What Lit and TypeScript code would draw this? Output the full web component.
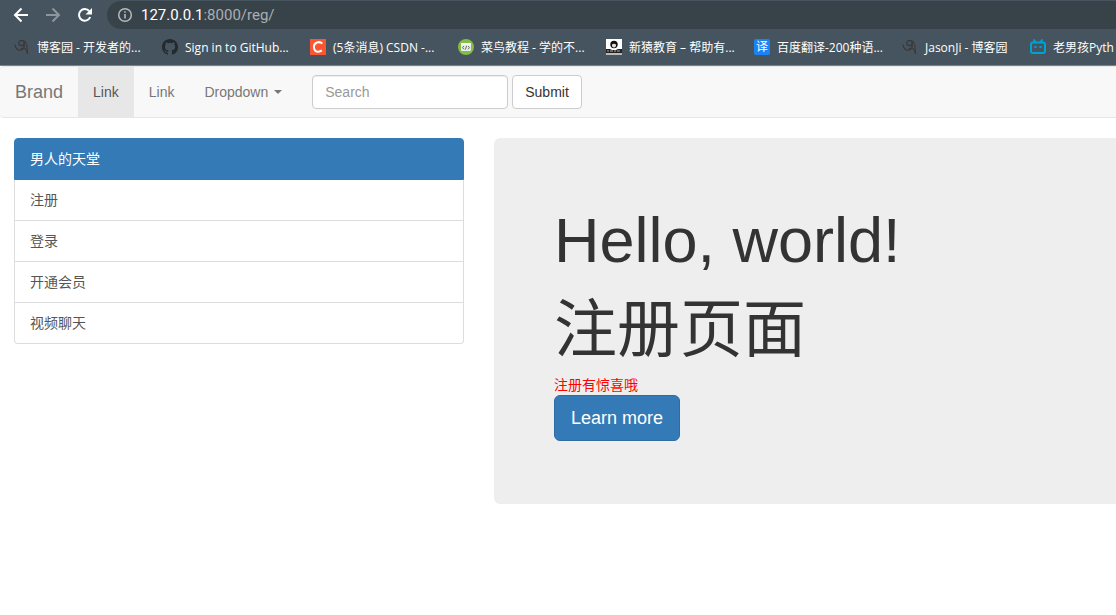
import { LitElement, html, css, svg } from "lit";
import { customElement, property } from "lit/decorators.js";
import { classMap } from "lit/directives/class-map.js";

const cnblogs = svg`<svg viewBox="0 0 16 16" width="16" height="16" aria-hidden="true">
  <g fill="none" stroke="#3b3737" stroke-width="1.2" stroke-linecap="round">
    <circle cx="7.500" cy="4" r="2.700"/>
    <path d="M10.200 4C10.800 7.500 9.500 10.800 6.500 11.200C3.500 11.300 1.500 8.500 .8 5.800M6.500 11C9 7.800 12.300 8.500 13.300 14.500"/>
    <path d="M11 2C12.800 5 13.400 9 13.400 14" stroke-width="1"/>
  </g></svg>`;

const github = svg`<svg viewBox="0 0 16 16" width="16" height="16" aria-hidden="true">
  <path fill="#24292e" d="M8 0C3.580 0 0 3.580 0 8c0 3.540 2.290 6.530 5.470 7.590.4.070.55-.17.55-.38 0-.19-.01-.82-.01-1.490-2.010.37-2.530-.49-2.690-.94-.09-.23-.48-.94-.82-1.130-.28-.15-.68-.52-.01-.53.63-.01 1.080.58 1.230.82.72 1.210 1.870.87 2.330.66.07-.52.28-.87.51-1.070-1.780-.2-3.640-.89-3.640-3.950 0-.87.31-1.590.82-2.150-.08-.2-.36-1.020.08-2.120 0 0 .67-.21 2.200.82a7.600 7.600 0 0 1 4 0c1.530-1.040 2.200-.82 2.200-.82.44 1.100.16 1.920.08 2.120.51.56.82 1.270.82 2.150 0 3.070-1.870 3.750-3.650 3.950.29.25.54.73.54 1.480 0 1.070-.01 1.930-.01 2.200 0 .21.15.46.55.38A8 8 0 0 0 16 8c0-4.420-3.580-8-8-8z"/></svg>`;

const csdn = svg`<svg viewBox="0 0 16 16" width="16" height="16" aria-hidden="true">
  <rect width="16" height="16" fill="#fc5531"/>
  <path d="M12.200 4.700C11 3.200 9 2.800 7 3.500C4.600 4.400 3.700 7 4 9.200C4.400 12 6.500 13 8.500 12.700C9.800 12.600 10.800 12.200 11.800 11.400" fill="none" stroke="#fff" stroke-width="2"/></svg>`;

const runoob = svg`<svg viewBox="0 0 16 16" width="16" height="16" aria-hidden="true">
  <circle cx="8" cy="8" r="8" fill="#83bd45"/>
  <rect x="3" y="4" width="10" height="8" rx="1" fill="#e9ede9"/>
  <path d="M3 4.800h10" stroke="#fff" stroke-width="1.600"/>
  <path d="M6 7L4.500 8.700L6 10.300M10 7l1.500 1.700L10 10.300M8.600 6.800l-1.200 3.700" fill="none" stroke="#5f6b61" stroke-width="1"/></svg>`;

const monkey = svg`<svg viewBox="0 0 16 16" width="16" height="16" aria-hidden="true">
  <rect width="16" height="16" fill="#fff"/>
  <circle cx="8" cy="5.500" r="3.700" fill="#111"/>
  <path d="M6 5.500q2-1.500 4 0q.3 3-2 3t-2-3z" fill="#ddd"/>
  <path d="M0 10h4l2 1h4l2-1h4v4H0z" fill="#222"/>
  <path d="M1 12h2m1 0h3m1 0h2m1 0h3" stroke="#aaa" stroke-width="1"/>
  <path d="M0 14h16v2H0z" fill="#bbb"/></svg>`;

const bilibili = svg`<svg viewBox="0 0 16 16" width="16" height="16" aria-hidden="true">
  <rect x="1" y="3.500" width="14" height="10.500" rx="2" fill="none" stroke="#00a1d6" stroke-width="2"/>
  <path d="M3.500 .5l2 2.500M12.500 .5l-2 2.500M5.500 7v2M10.500 7v2" fill="none" stroke="#00a1d6" stroke-width="2"/></svg>`;

const translate = html`<span class="translate">译</span>`;

const bookmarks = [
  { icon: cnblogs, label: "博客园 - 开发者的..." },
  { icon: github, label: "Sign in to GitHub..." },
  { icon: csdn, label: "(5条消息) CSDN -..." },
  { icon: runoob, label: "菜鸟教程 - 学的不..." },
  { icon: monkey, label: "新猿教育 – 帮助有..." },
  { icon: translate, label: "百度翻译-200种语..." },
  { icon: cnblogs, label: "JasonJi - 博客园", short: true },
  { icon: bilibili, label: "老男孩Pyth", short: true },
];

@customElement("browser-bar")
class BrowserBar extends LitElement {
  static styles = css`
    :host {
      display: block;
      background: #45545e;
      border-bottom: 1px solid #7c8289;
      color: #fff;
      font-family: "Open Sans", "Noto Sans CJK SC", sans-serif;
    }
    .toolbar { display: flex; align-items: center; padding-top: 1px; }
    .tools { display: flex; gap: 16px; padding: 0 14px 0 13px; }
    .tool { display: flex; padding: 0; border: 0; background: none; color: #fff; }
    .tool:disabled { color: #8d969c; }
    .address {
      flex: 1;
      display: flex;
      align-items: center;
      gap: 8px;
      height: 28px;
      padding-left: 10px;
      border-radius: 14px 0 0 14px;
      background: #384249;
      font-family: Roboto, sans-serif;
      font-size: 15px;
      line-height: 28px;
      color: #a9afb3;
    }
    .host { color: #fff; }
    .bookmarks { display: flex; gap: 16px; height: 36px; padding-left: 14px; overflow: hidden; }
    .bookmark {
      flex: none;
      display: flex;
      align-items: center;
      gap: 7px;
      color: #fff;
      font-size: 12px;
      line-height: 20px;
      text-decoration: none;
      white-space: nowrap;
    }
    .label { width: 109px; padding-top: 1px; }
    .short { width: auto; min-width: 89px; }
    .bookmark:last-child .label { min-width: 0; }
    .translate {
      width: 16px;
      height: 16px;
      border-radius: 2px;
      background: #1a84f5;
      font-size: 12px;
      line-height: 16px;
      text-align: center;
    }
  `;

  render() {
    return html`
      <div class="toolbar">
        <div class="tools">
          <button class="tool" aria-label="Back">
            <svg width="16" height="16" viewBox="0 0 16 16" fill="none" stroke="currentColor" stroke-width="2"><path d="M15 8H2.500M8.500 1.500L2 8l6.500 6.500"/></svg>
          </button>
          <button class="tool" aria-label="Forward" disabled>
            <svg width="16" height="16" viewBox="0 0 16 16" fill="none" stroke="currentColor" stroke-width="2"><path d="M1 8h12.500M7.500 1.500L14 8l-6.500 6.500"/></svg>
          </button>
          <button class="tool" aria-label="Reload">
            <svg width="16" height="16" viewBox="0 0 16 16"><path d="M13.200 10A5.800 5.800 0 1 1 12.300 4.200" fill="none" stroke="currentColor" stroke-width="2"/><path d="M15 1v6.500H8.500z" fill="currentColor"/></svg>
          </button>
        </div>
        <div class="address">
          <svg width="16" height="16" viewBox="0 0 16 16" fill="none" stroke="#b4babe" aria-hidden="true"><circle cx="8" cy="8" r="6.300" stroke-width="1.500"/><path d="M8 7v4.500M8 4.200v1.600" stroke-width="1.600"/></svg>
          <span><span class="host">127.0.0.1</span>:8000/reg/</span>
        </div>
      </div>
      <nav class="bookmarks" aria-label="Bookmarks">
        ${bookmarks.map((b) => html`<a class="bookmark" href="#">${b.icon}<span class=${classMap({ label: true, short: !!b.short })}>${b.label}</span></a>`)}
      </nav>
    `;
  }
}

@customElement("nav-bar")
class NavBar extends LitElement {
  static styles = css`
    :host { display: block; }
    .bar {
      display: flex;
      align-items: center;
      min-height: 50px;
      border: solid #e7e7e7;
      border-width: 1px 0;
      border-radius: 4px 0 0 4px;
      background: #f8f8f8;
    }
    .brand, .link { padding: 15px; line-height: 20px; color: #777; text-decoration: none; }
    .brand { font-size: 18px; }
    .active { background: #e7e7e7; color: #555; }
    .menu { display: flex; align-items: center; gap: 6px; border: 0; background: none; font: inherit; line-height: 20px; }
    .caret { border: 4px solid transparent; border-top-color: currentColor; border-bottom: 0; }
    .search { display: flex; gap: 4px; padding: 0 15px; }
    .input, .submit {
      box-sizing: border-box;
      height: 34px;
      padding: 6px 12px;
      border: 1px solid #ccc;
      border-radius: 4px;
      background: #fff;
      font: inherit;
      color: #333;
    }
    .input { width: 196px; box-shadow: inset 0 1px 1px rgba(0, 0, 0, 0.075); }
    .input::placeholder { color: #999; }
  `;

  render() {
    return html`
      <nav class="bar">
        <a class="brand" href="#">Brand</a>
        <a class="link active" href="#" aria-current="page">Link</a>
        <a class="link" href="#">Link</a>
        <button class="link menu" aria-haspopup="true">Dropdown<span class="caret"></span></button>
        <form class="search" @submit=${(e: Event) => e.preventDefault()}>
          <input class="input" type="text" placeholder="Search" aria-label="Search" />
          <button class="submit" type="submit">Submit</button>
        </form>
      </nav>
    `;
  }
}

@customElement("side-list")
class SideList extends LitElement {
  @property({ type: Array }) items: string[] = [];

  static styles = css`
    :host { display: block; }
    .list { display: flex; flex-direction: column; }
    .item { padding: 10px 15px; border: 1px solid #ddd; border-top: 0; line-height: 20px; color: #555; text-decoration: none; }
    .item:last-child { border-radius: 0 0 4px 4px; }
    .head { border: 1px solid #337ab7; border-radius: 4px 4px 0 0; background: #337ab7; color: #fff; }
  `;

  render() {
    return html`<nav class="list">
      ${this.items.map((t, i) => html`<a class=${classMap({ item: true, head: i === 0 })} href="#">${t}</a>`)}
    </nav>`;
  }
}

@customElement("app-root")
class AppRoot extends LitElement {
  static styles = css`
    :host {
      display: block;
      min-height: 100vh;
      overflow: hidden;
      background: #fff;
      color: #333;
      font: 14px/20px "Liberation Sans", "Noto Sans CJK SC", sans-serif;
    }
    .columns {
      display: grid;
      grid-template-columns: minmax(0, 450px) minmax(0, 1fr);
      align-items: start;
      gap: 30px;
      padding: 20px 0 0 14px;
    }
    .hero { padding: 48px 0 63px 60px; border-radius: 6px 0 0 6px; background: #eee; }
    .title { margin: 20px 0; font-size: 63px; line-height: 69px; font-weight: 400; }
    .title + .title { margin-bottom: 11px; }
    .note { margin: 0; color: #f00; }
    .more {
      display: inline-block;
      padding: 10px 16px;
      border: 1px solid #2e6da4;
      border-radius: 6px;
      background: #337ab7;
      color: #fff;
      font-size: 18px;
      line-height: 24px;
      text-decoration: none;
    }
  `;

  render() {
    return html`
      <browser-bar></browser-bar>
      <nav-bar></nav-bar>
      <main class="columns">
        <side-list .items=${["男人的天堂", "注册", "登录", "开通会员", "视频聊天"]}></side-list>
        <section class="hero">
          <h1 class="title">Hello, world!</h1>
          <h1 class="title">注册页面</h1>
          <p class="note">注册有惊喜哦</p>
          <a class="more" href="#">Learn more</a>
        </section>
      </main>
    `;
  }
}
